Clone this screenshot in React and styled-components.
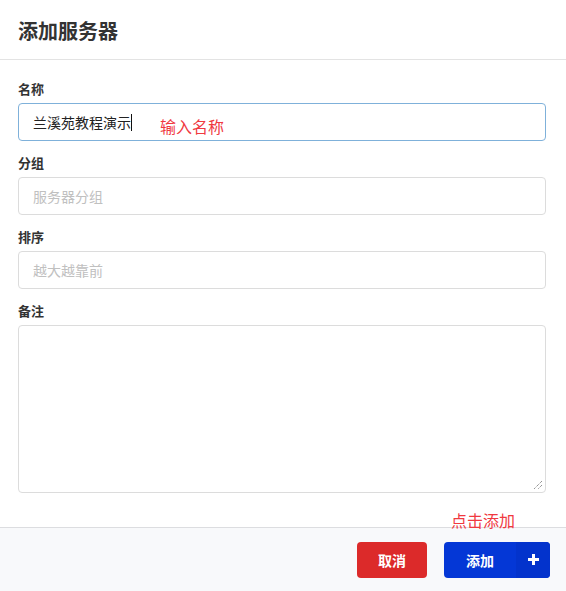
import React from "react";
import styled, { createGlobalStyle } from "styled-components";

const Global = createGlobalStyle`
  html, body { margin: 0; padding: 0; background: #fff; }
  body { font-family: "Noto Sans CJK SC", "Noto Sans", sans-serif; color: #333; }
  * { box-sizing: border-box; }
`;

const Modal = styled.div`
  width: 566px;
  height: 591px;
  display: flex;
  flex-direction: column;
  background: #fff;
  position: relative;
`;

const Header = styled.div`
  height: 60px;
  flex: none;
  display: flex;
  align-items: center;
  padding: 0 18px;
  border-bottom: 1px solid #e3e3e3;
`;

const Title = styled.h3`
  margin: 0;
  font-size: 20px;
  font-weight: 700;
  color: #333;
  line-height: 26px;
  margin-top: 3px;
`;

const Body = styled.div`
  flex: 1;
  padding: 19px 20px 0 18px;
  display: flex;
  flex-direction: column;
  gap: 12px;
`;

const Field = styled.div`
  display: flex;
  flex-direction: column;
  gap: 4px;
  position: relative;
`;

const Label = styled.label`
  font-size: 13px;
  font-weight: 700;
  line-height: 20px;
  color: #333;
`;

const Input = styled.div`
  height: 38px;
  border: 1px solid ${(p) => (p.$focused ? "#7fb1da" : "#dcdcdc")};
  border-radius: 4px;
  padding: 0 14px;
  display: flex;
  align-items: center;
  font-size: 14px;
  color: ${(p) => (p.$placeholder ? "#c0c0c0" : "#222")};
  background: #fff;
`;

const Caret = styled.span`
  display: inline-block;
  width: 1px;
  height: 17px;
  background: #111;
`;

const TextArea = styled.div`
  height: 168px;
  border: 1px solid #dcdcdc;
  border-radius: 4px;
  position: relative;
`;

const Grip = styled.svg`
  position: absolute;
  right: 2px;
  bottom: 2px;
`;

const Note = styled.span`
  position: absolute;
  color: #f0393f;
  font-size: 16px;
  line-height: 20px;
  white-space: nowrap;
  font-family: "Noto Sans CJK SC", sans-serif;
`;

const Footer = styled.div`
  height: 64px;
  flex: none;
  background: #f8f9fb;
  border-top: 1px solid #dcdde0;
  display: flex;
  align-items: center;
  justify-content: flex-end;
  gap: 17px;
  padding: 0 16px 0 0;
`;

const Button = styled.button`
  height: 36px;
  border: none;
  border-radius: 4px;
  color: #fff;
  font-family: "Noto Sans CJK SC", sans-serif;
  font-size: 14px;
  font-weight: 700;
  padding: 0;
  display: flex;
  align-items: stretch;
  overflow: hidden;
  background: ${(p) => (p.$variant === "danger" ? "#dc2a2a" : "#0437d6")};
  width: ${(p) => p.$width}px;
`;

const BtnText = styled.span`
  flex: 1;
  display: flex;
  align-items: center;
  justify-content: center;
`;

const BtnIcon = styled.span`
  width: 34px;
  display: flex;
  align-items: center;
  justify-content: center;
  background: #0333cc;
`;

export default function App() {
  return (
    <>
      <Global />
      <Modal>
        <Header>
          <Title>添加服务器</Title>
        </Header>
        <Body>
          <Field>
            <Label>名称</Label>
            <Input $focused>
              <span>兰溪苑教程演示</span>
              <Caret />
            </Input>
            <Note style={{ left: 142, top: 37 }}>输入名称</Note>
          </Field>
          <Field>
            <Label>分组</Label>
            <Input $placeholder>服务器分组</Input>
          </Field>
          <Field>
            <Label>排序</Label>
            <Input $placeholder>越大越靠前</Input>
          </Field>
          <Field>
            <Label>备注</Label>
            <TextArea>
              <Grip width="10" height="10" viewBox="0 0 10 10">
                <path d="M9 1 L1 9 M9 5 L5 9" stroke="#666" strokeWidth="1" strokeDasharray="1 1" />
              </Grip>
            </TextArea>
          </Field>
        </Body>
        <Note style={{ left: 451, top: 510 }}>点击添加</Note>
        <Footer>
          <Button $variant="danger" $width={70}>
            <BtnText>取消</BtnText>
          </Button>
          <Button $width={106}>
            <BtnText>添加</BtnText>
            <BtnIcon>
              <svg width="13" height="13" viewBox="0 0 13 13">
                <path d="M6.5 1 V12 M1 6.5 H12" stroke="#fff" strokeWidth="3" />
              </svg>
            </BtnIcon>
          </Button>
        </Footer>
      </Modal>
    </>
  );
}
